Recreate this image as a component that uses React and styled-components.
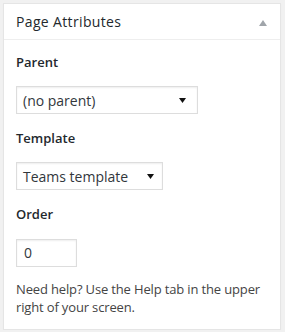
import React from 'react'
import styled, { createGlobalStyle } from 'styled-components'

const GlobalStyle = createGlobalStyle`
html, body {
    margin: 0;
    padding: 0;
    background: #f1f1f1;
}
body {
    padding: 3px 4px 0 3px;
    font-family: "Open Sans", "Liberation Sans", sans-serif;
}`

const Postbox = styled.div`
width: 278px;
box-sizing: border-box;
background: #fff;
border: 1px solid #e5e5e5;
box-shadow: 0 1px 1px rgba(0, 0, 0, 0.04);`

const Header = styled.div`
display: flex;
align-items: center;
justify-content: space-between;
box-sizing: border-box;
height: 36px;
padding: 0 13px 0 12px;
border-bottom: 1px solid #eee;`

const Title = styled.h2`
margin: 0;
font-size: 14px;
font-weight: 400;
letter-spacing: 0.35px;
color: #23282d;
line-height: 1.4;`

const Toggle = styled.svg`
width: 8px;
height: 6px;
fill: #a0a5aa;
margin-top: 2px;`

const Inside = styled.div`
padding: 13px 12px 13px;`

const Label = styled.p`
margin: 0 0 15px;
font-size: 13px;
font-weight: 600;
line-height: 1.4;
color: #23282d;`

const Select = styled.div`
display: flex;
align-items: center;
justify-content: space-between;
box-sizing: border-box;
width: ${p => p.width}px;
height: 28px;
padding: 0 ${p => p.arrowGap}px 0 6px;
margin-bottom: 15px;
border: 1px solid #ddd;
box-shadow: inset 0 1px 2px rgba(0, 0, 0, 0.07);
font-size: 14px;
color: #32373c;`

const Arrow = styled.svg`
width: 7px;
height: 5px;
fill: #111;`

const Input = styled.div`
box-sizing: border-box;
width: 61px;
height: 28px;
padding: 0 7px;
margin-bottom: 13px;
display: flex;
align-items: center;
border: 1px solid #ddd;
box-shadow: inset 0 1px 2px rgba(0, 0, 0, 0.07);
font-size: 14px;
color: #32373c;`

const Help = styled.p`
margin: 0;
font-size: 13px;
line-height: 18px;
letter-spacing: -0.15px;
color: #444;`

const DropArrow = () => (
    <Arrow viewBox="0 0 7 5">
        <path d="M0 0h7L3.5 5z" />
    </Arrow>
)

class App extends React.Component {
    render() {
        return (
            <React.Fragment>
                <GlobalStyle />
                <Postbox>
                    <Header>
                        <Title>Page Attributes</Title>
                        <Toggle viewBox="0 0 8 6">
                            <path d="M4 0l4 6H0z" />
                        </Toggle>
                    </Header>
                    <Inside>
                        <Label>Parent</Label>
                        <Select width={182} arrowGap={11}>
                            (no parent)
                            <DropArrow />
                        </Select>
                        <Label>Template</Label>
                        <Select width={147} arrowGap={8}>
                            Teams template
                            <DropArrow />
                        </Select>
                        <Label>Order</Label>
                        <Input>0</Input>
                        <Help>
                            Need help? Use the Help tab in the upper right of your screen.
                        </Help>
                    </Inside>
                </Postbox>
            </React.Fragment>
        )
    }
}

export default App
